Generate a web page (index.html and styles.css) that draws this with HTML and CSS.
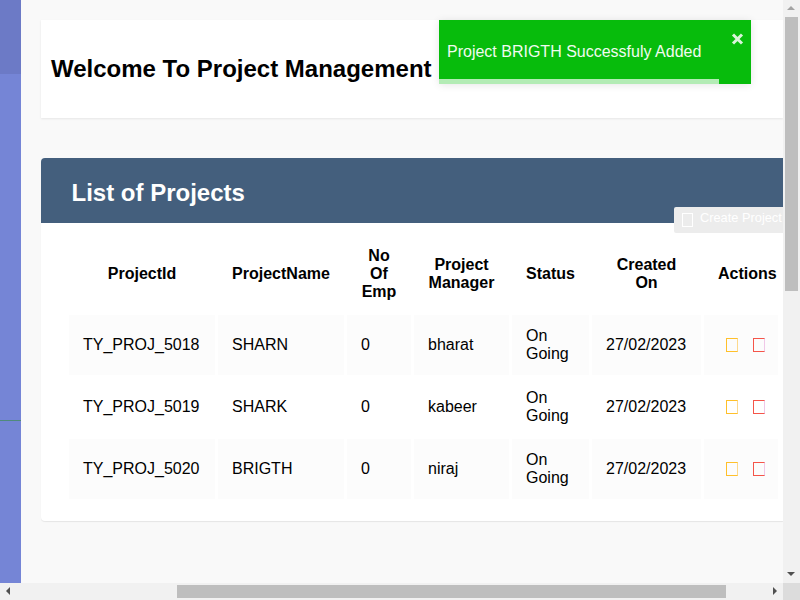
FILE: index.html
```html
<!DOCTYPE html>
<html>
<head>
    <title>Project Management</title>
    <meta name="viewport" content="width=device-width, initial-scale=1">
    <link rel="stylesheet" href="styles.css">
</head>
<body>
    <div class="window">
        <div class="viewport">
            <aside class="sidebar">
                <div class="sidebar-top"></div>
                <div class="sidebar-mid"></div>
                <div class="sidebar-line"></div>
                <div class="sidebar-rest"></div>
            </aside>
            <main class="content">
                <div class="welcome">
                    <h2>Welcome To Project Management</h2>
                </div>
                <div class="projects">
                    <div class="projects-head">
                        <h3>List of Projects</h3>
                    </div>
                    <table class="projects-table">
                        <colgroup>
                            <col class="col-id">
                            <col class="col-name">
                            <col class="col-emp">
                            <col class="col-manager">
                            <col class="col-status">
                            <col class="col-date">
                            <col class="col-actions">
                        </colgroup>
                        <thead>
                            <tr>
                                <th>ProjectId</th>
                                <th>ProjectName</th>
                                <th>No Of Emp</th>
                                <th>Project Manager</th>
                                <th>Status</th>
                                <th>Created On</th>
                                <th>Actions</th>
                            </tr>
                        </thead>
                        <tbody>
                            <tr>
                                <td>TY_PROJ_5018</td>
                                <td>SHARN</td>
                                <td>0</td>
                                <td>bharat</td>
                                <td>On Going</td>
                                <td>27/02/2023</td>
                                <td class="actions"><div class="action-icons"><span class="icon-box edit"></span><span class="icon-box remove"></span></div></td>
                            </tr>
                            <tr>
                                <td>TY_PROJ_5019</td>
                                <td>SHARK</td>
                                <td>0</td>
                                <td>kabeer</td>
                                <td>On Going</td>
                                <td>27/02/2023</td>
                                <td class="actions"><div class="action-icons"><span class="icon-box edit"></span><span class="icon-box remove"></span></div></td>
                            </tr>
                            <tr>
                                <td>TY_PROJ_5020</td>
                                <td>BRIGTH</td>
                                <td>0</td>
                                <td>niraj</td>
                                <td>On Going</td>
                                <td>27/02/2023</td>
                                <td class="actions"><div class="action-icons"><span class="icon-box edit"></span><span class="icon-box remove"></span></div></td>
                            </tr>
                        </tbody>
                    </table>
                </div>
            </main>
            <a class="create-btn"><span class="create-icon"></span><span class="create-label">Create Project</span></a>
            <div class="toast">
                <span class="toast-text">Project BRIGTH Successfuly Added</span>
                <svg class="toast-close" viewBox="0 0 13 12" width="13" height="12">
                    <path d="M2 1.5 L11 10.5 M11 1.5 L2 10.5" stroke="#d9f4da" stroke-width="3" fill="none"/>
                </svg>
                <div class="toast-progress"></div>
            </div>
        </div>
        <div class="scroll-y">
            <span class="arrow arrow-up"></span>
            <div class="scroll-y-track"><div class="scroll-y-thumb"></div></div>
            <span class="arrow arrow-down"></span>
        </div>
        <div class="scroll-x">
            <span class="arrow arrow-left"></span>
            <div class="scroll-x-track"><div class="scroll-x-thumb"></div></div>
            <span class="arrow arrow-right"></span>
        </div>
        <div class="scroll-corner"></div>
    </div>
</body>
</html>
```

FILE: styles.css
```css
* {
    box-sizing: border-box;
}
html, body {
    margin: 0;
    height: 100%;
    overflow: hidden;
}
body {
    font-family: "Liberation Sans", Arial, sans-serif;
    font-size: 16px;
    color: #000;
}
.window {
    display: grid;
    grid-template-columns: 783px 17px;
    grid-template-rows: 583px 17px;
    width: 800px;
    height: 600px;
}

/* page area */
.viewport {
    position: relative;
    display: flex;
    overflow: hidden;
    background-color: #f9f9f9;
}
.sidebar {
    display: flex;
    flex-direction: column;
    flex: 0 0 21px;
}
.sidebar-top {
    height: 74px;
    background-color: #6c7ac6;
}
.sidebar-mid {
    height: 346px;
    background-color: #7585d6;
}
.sidebar-line {
    height: 1px;
    background-color: #4f8a7c;
}
.sidebar-rest {
    flex: 1;
    background-color: #7585d6;
}
.content {
    flex: 1;
    min-width: 0;
    padding: 20px 0 0 20px;
}
.welcome {
    display: flex;
    align-items: center;
    height: 98px;
    padding-left: 10px;
    background-color: #fff;
    box-shadow: 0 1px 2px rgba(0, 0, 0, 0.08);
}
.welcome h2 {
    margin: 0;
    font-size: 24px;
}
.projects {
    margin-top: 40px;
    height: 363px;
    background-color: #fff;
    border-radius: 4px 0 0 4px;
    box-shadow: 0 1px 1px rgba(0, 0, 0, 0.08);
    overflow: hidden;
}
.projects-head {
    display: flex;
    align-items: center;
    height: 65px;
    padding: 4px 0 0 30.5px;
    background-color: #445f7d;
}
.projects-head h3 {
    margin: 0;
    font-size: 24px;
    color: #fff;
}

/* table */
.projects-table {
    table-layout: fixed;
    width: 715px;
    margin: 10px 0 0 25px;
    border-collapse: separate;
    border-spacing: 3px 2px;
}
.col-id { width: 146px; }
.col-name { width: 126px; }
.col-emp { width: 64px; }
.col-manager { width: 95px; }
.col-status { width: 77px; }
.col-date { width: 109px; }
.col-actions { width: 74px; }
.projects-table th {
    padding: 12px 14px;
    line-height: 18px;
    text-align: center;
}
.projects-table td {
    height: 60px;
    padding: 12px 14px;
    line-height: 18px;
    background-color: #fcfcfc;
}
.projects-table tbody tr:nth-child(2) td {
    background-color: #fff;
}
.projects-table td.actions {
    padding: 0 0 0 22px;
}
.action-icons {
    display: flex;
    gap: 15px;
}
.icon-box {
    width: 12px;
    height: 14px;
    border: 1px solid;
}
.edit {
    border-color: #ffc02a;
    border-right-color: #fdd98c;
}
.remove {
    border-color: #f55549;
    border-right-color: #f0c8e8;
}

/* things lying over the page */
.create-btn {
    position: absolute;
    top: 207px;
    left: 674px;
    display: flex;
    align-items: center;
    width: 109px;
    height: 26px;
    padding-left: 8px;
    overflow: hidden;
    background-color: #ececec;
    border-radius: 2px 0 0 2px;
    color: #fff;
    font-size: 12.8px;
    white-space: nowrap;
}
.create-icon {
    flex: none;
    width: 11px;
    height: 14px;
    margin-right: 7px;
    border: 1px solid #fff;
}
.create-label {
    margin-top: -6px;
}
.toast {
    position: absolute;
    top: 20px;
    left: 439px;
    width: 312px;
    height: 64px;
    padding: 23px 8px 0;
    background-color: #07bc0c;
    color: #f0fbf0;
    box-shadow: 0 1px 8px rgba(0, 0, 0, 0.1);
    line-height: 18px;
}
.toast-close {
    position: absolute;
    top: 13px;
    right: 7px;
}
.toast-progress {
    position: absolute;
    left: 0;
    bottom: 0;
    width: 280px;
    height: 5px;
    background-color: #b3ecb5;
}

/* scrollbars */
.scroll-y, .scroll-x {
    display: flex;
    align-items: center;
    background-color: #f1f1f1;
}
.scroll-y {
    flex-direction: column;
}
.scroll-y-track {
    flex: 1;
    width: 100%;
    padding: 0 2px;
}
.scroll-y-thumb {
    height: 274px;
    background-color: #bebebe;
}
.scroll-x-track {
    flex: 1;
    height: 100%;
    padding: 2px 0 2px 160px;
}
.scroll-x-thumb {
    width: 549px;
    height: 13px;
    background-color: #bebebe;
}
.scroll-corner {
    background-color: #dcdcdc;
}
.arrow {
    flex: none;
    width: 17px;
    height: 17px;
    position: relative;
}
.arrow::after {
    content: "";
    position: absolute;
    width: 0;
    height: 0;
    border-style: solid;
    border-color: transparent;
}
.arrow-up::after {
    left: 4px;
    top: 6px;
    border-width: 0 4px 4px;
    border-bottom-color: #a3a3a3;
}
.arrow-down::after {
    left: 4px;
    top: 6px;
    border-width: 4px 4px 0;
    border-top-color: #505050;
}
.arrow-left::after {
    left: 6px;
    top: 4px;
    border-width: 4px 4px 4px 0;
    border-right-color: #505050;
}
.arrow-right::after {
    left: 7px;
    top: 4px;
    border-width: 4px 0 4px 4px;
    border-left-color: #505050;
}
```
